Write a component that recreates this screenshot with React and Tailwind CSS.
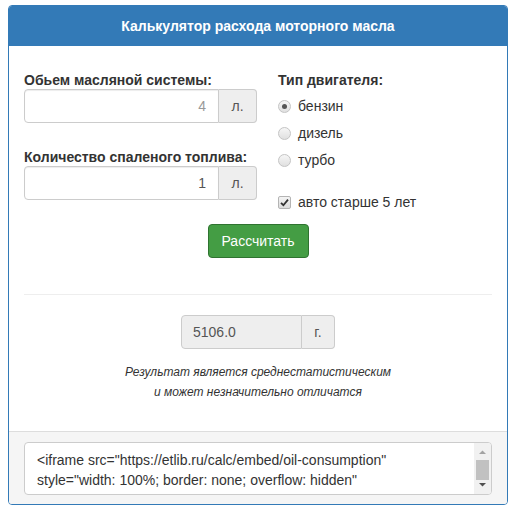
export default function App() {
  const font = { fontFamily: '"Liberation Sans", Arial, sans-serif' };

  const radios = [
    { label: "бензин", checked: true },
    { label: "дизель", checked: false },
    { label: "турбо", checked: false },
  ];

  return (
    <div className="bg-white w-[514px] h-[518px] pt-[5px] pl-[8px]" style={font}>
      <div className="w-[500px] h-[500px] border border-[#337ab7] rounded-[4px] flex flex-col overflow-hidden">
        {/* Header */}
        <div className="h-[40px] bg-[#337ab7] flex items-center justify-center text-white font-bold text-[14px]">
          Калькулятор расхода моторного масла
        </div>

        {/* Body */}
        <div className="flex-1 px-[15px] pt-[26px] text-[#333] text-[14px]">
          <div className="flex">
            {/* left column */}
            <div className="w-[233px]">
              <label className="block font-bold leading-[16px] mb-[1px]">Обьем масляной системы:</label>
              <div className="flex h-[34px]">
                <div className="flex-1 border border-[#ccc] rounded-l-[4px] flex items-center justify-end pr-[12px] text-[#999] shadow-[inset_0_1px_1px_rgba(0,0,0,0.075)]">
                  4
                </div>
                <div className="w-[38px] bg-[#eee] border border-l-0 border-[#ccc] rounded-r-[4px] flex items-center justify-center text-[#555]">
                  л.
                </div>
              </div>

              <label className="block font-bold leading-[16px] mb-[1px] mt-[26px]">Количество спаленого топлива:</label>
              <div className="flex h-[34px]">
                <div className="flex-1 border border-[#ccc] rounded-l-[4px] flex items-center justify-end pr-[12px] text-[#555] shadow-[inset_0_1px_1px_rgba(0,0,0,0.075)]">
                  1
                </div>
                <div className="w-[38px] bg-[#eee] border border-l-0 border-[#ccc] rounded-r-[4px] flex items-center justify-center text-[#555]">
                  л.
                </div>
              </div>
            </div>

            {/* right column */}
            <div className="ml-[21px]">
              <div className="font-bold leading-[16px]">Тип двигателя:</div>
              <div className="mt-[5px] flex flex-col">
                {radios.map((r) => (
                  <div key={r.label} className="flex items-center h-[27px]">
                    <span className="w-[13px] h-[13px] rounded-full border border-[#c4c4c4] bg-gradient-to-b from-[#f6f6f6] to-[#e0e0e0] flex items-center justify-center">
                      {r.checked && <span className="w-[5px] h-[5px] rounded-full bg-[#555]" />}
                    </span>
                    <span className="ml-[7px]">{r.label}</span>
                  </div>
                ))}
              </div>
              <div className="flex items-center h-[27px] mt-[15px]">
                <span className="w-[13px] h-[13px] rounded-[2px] border border-[#b4b4b4] bg-gradient-to-b from-[#f4f4f4] to-[#dcdcdc] flex items-center justify-center">
                  <svg width="9" height="9" viewBox="0 0 9 9">
                    <path d="M1 4.8 L3.4 7.2 L8 1.6" fill="none" stroke="#333" strokeWidth="1.8" />
                  </svg>
                </span>
                <span className="ml-[7px]">авто старше 5 лет</span>
              </div>
            </div>
          </div>

          <div className="flex justify-center mt-[8px]">
            <button className="w-[101px] h-[34px] bg-[#449d44] border border-[#2f7330] rounded-[4px] text-white text-[14px]">
              Рассчитать
            </button>
          </div>

          <div className="border-t border-[#eee] mt-[36px]" />

          <div className="flex justify-center mt-[20px]">
            <div className="flex h-[34px]">
              <div className="w-[121px] bg-[#eee] border border-[#ccc] rounded-l-[4px] flex items-center pl-[11px] text-[#555]">
                5106.0
              </div>
              <div className="w-[33px] bg-[#eee] border border-l-0 border-[#ccc] rounded-r-[4px] flex items-center justify-center text-[#555]">
                г.
              </div>
            </div>
          </div>

          <div className="mt-[13px] text-center italic text-[12px] leading-[20px] text-[#333]">
            Результат является среднестатистическим
            <br />
            и может незначительно отличатся
          </div>
        </div>

        {/* Footer */}
        <div className="h-[73px] bg-[#f5f5f5] border-t border-[#ddd] px-[15px] pt-[10px]">
          <div className="h-[53px] bg-white border border-[#ccc] rounded-[4px] flex overflow-hidden">
            <div className="flex-1 px-[12px] pt-[7px] text-[14px] leading-[20px] text-[#333] overflow-hidden">
              &lt;iframe src="https://etlib.ru/calc/embed/oil-consumption" style="width: 100%; border: none; overflow: hidden" onload="this.height=(this.contentWindow.innerWidth &gt; 500 ? 640 : 580)"&gt;&lt;/iframe&gt;
            </div>
            <div className="w-[17px] bg-[#f1f1f1] flex flex-col items-center py-[2px]">
              <svg width="9" height="9" viewBox="0 0 9 9" className="mt-[3px]">
                <path d="M1 6 L4.5 2.5 L8 6 Z" fill="#a3a3a3" />
              </svg>
              <div className="w-[13px] h-[20px] bg-[#c1c1c1] mt-[3px]" />
              <div className="flex-1" />
              <svg width="9" height="9" viewBox="0 0 9 9" className="mb-[3px]">
                <path d="M1 3 L4.5 6.5 L8 3 Z" fill="#505050" />
              </svg>
            </div>
          </div>
        </div>
      </div>
    </div>
  );
}
